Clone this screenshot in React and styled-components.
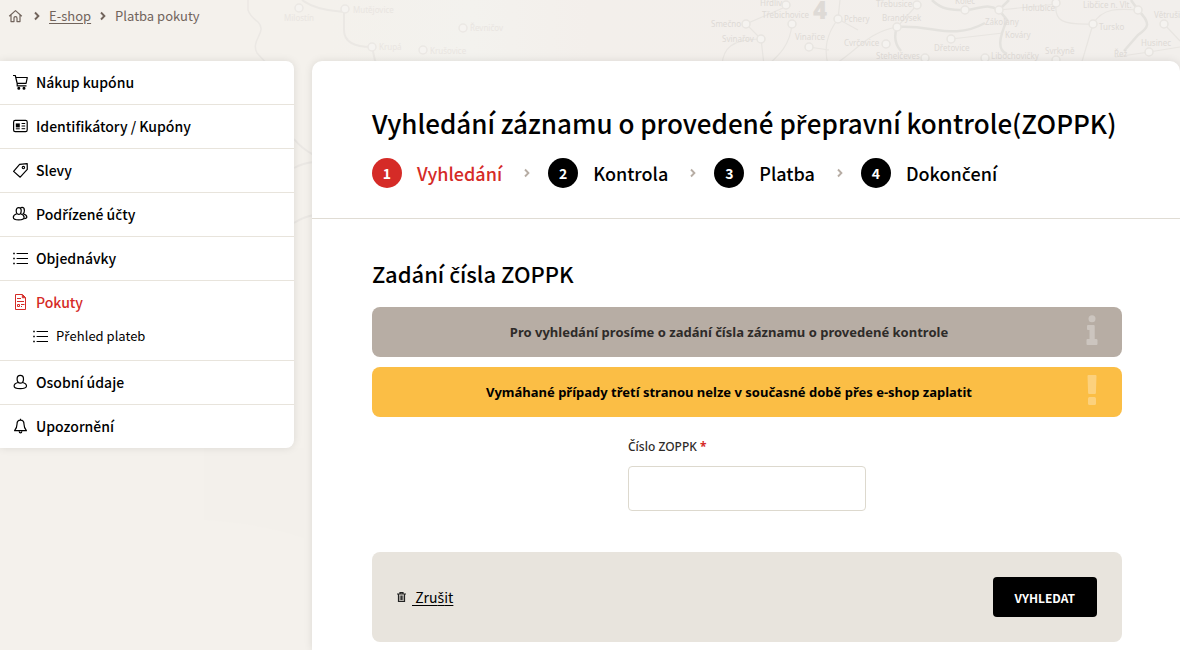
import { Fragment } from "react";
import styled, { createGlobalStyle } from "styled-components";

const fontFamily = `"Noto Sans CJK JP", "Noto Sans", sans-serif`;

const GlobalStyle = createGlobalStyle`
  * {
    box-sizing: border-box;
  }
  body {
    margin: 0;
    font-family: ${fontFamily};
    color: #000;
    background: #f4f1ec;
  }
`;

const Page = styled.div`
  position: relative;
  display: flex;
  flex-direction: column;
  min-height: 100vh;
  overflow: hidden;
`;

const MapBackground = styled.svg`
  position: absolute;
  top: 0;
  left: 0;
  z-index: -1;
  width: 1180px;
  height: 650px;
  font-family: "Noto Sans", sans-serif;
  font-size: 8px;
`;

const Breadcrumbs = styled.nav`
  display: flex;
  align-items: center;
  height: 61px;
  padding: 0 8px 30px;
  gap: 9px;
  font-size: 13px;
  line-height: 20px;
  color: #71645c;
  a {
    color: inherit;
    text-underline-offset: 2px;
  }
  svg {
    display: block;
  }
`;

const Columns = styled.div`
  display: flex;
  flex: 1;
  align-items: flex-start;
  gap: 18px;
`;

const Sidebar = styled.nav`
  flex: 0 0 294px;
  background: #fff;
  border-radius: 0 8px 8px 0;
  box-shadow: 0 0 8px #0000001a;
`;

const Menu = styled.ul`
  margin: 0;
  padding: 0;
  list-style: none;
`;

const MenuItem = styled.li`
  border-bottom: 1px solid #e8e4dc;
  &:last-child {
    border-bottom: 0;
  }
`;

const MenuLink = styled.a`
  display: flex;
  align-items: center;
  gap: 8px;
  padding: 10px 12px 11px;
  font-size: 14px;
  font-weight: 500;
  line-height: 22px;
  text-decoration: none;
  color: ${(p) => (p.$active ? "#d52b27" : "#000")};
`;

const SubMenu = styled.ul`
  margin: 0;
  padding: 0 0 12px 20px;
  list-style: none;
`;

const SubLink = styled(MenuLink)`
  padding: 0 12px;
  font-size: 13px;
  font-weight: 400;
  line-height: 24px;
`;

const Main = styled.main`
  flex: 1;
  align-self: stretch;
  background: #fff;
  border-radius: 10px 10px 0 0;
  box-shadow: 0 0 8px #0000001a;
`;

const Head = styled.header`
  padding: 44px 58px 30px 60px;
  border-bottom: 1px solid #e0dcd4;
`;

const Title = styled.h1`
  margin: 0 0 17px;
  font-size: 26px;
  font-weight: 500;
  line-height: 36px;
`;

const Steps = styled.ol`
  display: flex;
  align-items: center;
  margin: 0;
  padding: 0;
  list-style: none;
`;

const Step = styled.li`
  display: flex;
  align-items: center;
  gap: 15px;
  font-size: 18px;
  font-weight: 500;
  line-height: 30px;
  color: ${(p) => (p.$active ? "#d52b27" : "#000")};
`;

const StepNumber = styled.span`
  width: 30px;
  height: 30px;
  border-radius: 50%;
  background: ${(p) => (p.$active ? "#d52b27" : "#000")};
  color: #fff;
  font-size: 14px;
  font-weight: 700;
  text-align: center;
`;

const StepArrow = styled.li`
  display: flex;
  padding: 0 18px 0 22px;
`;

const Form = styled.form`
  padding: 38px 58px 8px 60px;
`;

const SectionTitle = styled.h2`
  margin: 0 0 18px;
  font-size: 22px;
  font-weight: 500;
  line-height: 32px;
`;

const Alert = styled.div`
  display: flex;
  align-items: center;
  gap: 24px;
  min-height: 50px;
  margin-bottom: 10px;
  padding: 0 24px;
  border-radius: 8px;
  background: ${(p) => (p.$warning ? "#fbbe45" : "#b7ada4")};
  color: ${(p) => (p.$warning ? "#000" : "#2e2b29")};
  p {
    flex: 1;
    margin: 0;
    font-family: "Noto Sans", sans-serif;
    font-size: 13px;
    font-weight: 700;
    line-height: 20px;
    text-align: center;
  }
`;

const Field = styled.div`
  width: 238px;
  margin: 20px auto 41px;
`;

const Label = styled.label`
  display: block;
  margin-bottom: 9px;
  font-family: "Noto Sans", sans-serif;
  font-size: 12px;
  font-weight: 500;
  line-height: 20px;
  color: #2e2b29;
`;

const Required = styled.span`
  color: #d52b27;
  font-weight: 700;
`;

const Input = styled.input`
  display: block;
  width: 100%;
  height: 45px;
  padding: 0 12px;
  border: 1px solid #ddd9ce;
  border-radius: 4px;
  background: #fff;
  font: 400 14px ${fontFamily};
`;

const Actions = styled.div`
  display: flex;
  align-items: center;
  justify-content: space-between;
  padding: 25px;
  border-radius: 8px;
  background: #e8e4dd;
`;

const CancelLink = styled.a`
  display: flex;
  align-items: center;
  gap: 5px;
  font-size: 14px;
  line-height: 20px;
  color: #000;
  text-decoration: none;
  span {
    white-space: pre;
    text-decoration: underline;
    text-underline-offset: 2px;
  }
`;

const SubmitButton = styled.button`
  height: 40px;
  padding: 0 22px;
  border: 0;
  border-radius: 4px;
  background: #000;
  color: #fff;
  font: 700 12px ${fontFamily};
  cursor: pointer;
`;

const Glyph = styled.i`
  font-family: "Noto Sans", sans-serif;
  font-style: normal;
  line-height: 0;
`;

const Czech = ({ children }) =>
  children
    .split(/([řčšžůŘČŠŽ]+)/)
    .map((part, i) =>
      i % 2 ? <Glyph key={i}>{part}</Glyph> : <Fragment key={i}>{part}</Fragment>
    );

const Icon = ({ children }) => (
  <svg
    width="16"
    height="16"
    viewBox="0 0 16 16"
    fill="none"
    stroke="currentColor"
    strokeWidth="1.2"
    strokeLinejoin="round"
    aria-hidden="true"
  >
    {children}
  </svg>
);

const CartIcon = () => (
  <Icon>
    <path d="M1 1.500h2.300l1.900 8M3.700 3.500h11.600l-1.200 5.800H5.200v2.600h9.300" />
    <circle cx="6.800" cy="14.200" r=".9" fill="currentColor" />
    <circle cx="12" cy="14.200" r=".9" fill="currentColor" />
  </Icon>
);

const CardIcon = () => (
  <Icon>
    <rect x="1.6" y="2.4" width="13.6" height="11.2" rx="1.6" />
    <path d="M3.8 5.4h4v4h-4z" fill="currentColor" stroke="none" />
    <path d="M9.6 5.5h3.6M9.6 8h3.6M9.6 10.7h3.6M3.8 10.8h4" strokeWidth="1" />
  </Icon>
);

const TagIcon = () => (
  <Icon>
    <path d="M1.600 9.400 7.600 2.400l7.600-.8.1 5.800-7.100 7.800z" />
    <circle cx="11.400" cy="5.600" r="1.200" strokeWidth="1.100" />
  </Icon>
);

const UsersIcon = () => (
  <Icon>
    <path d="M4.2 4.600c0-2 1.100-3 2.500-3s2.500 1 2.500 3-.7 3.800-2.500 3.800-2.500-1.800-2.500-3.800z" />
    <path d="M4.800 7.700c-2.400.8-3.500 1.900-3.500 3.600 0 2 2.200 2.600 5.400 2.600s5.400-.6 5.400-2.600c0-1.700-1.100-2.800-3.500-3.600" />
    <path d="M8.400 1.900c.5-.4 1.100-.5 1.700-.5 1.400 0 2.300 1.100 2.300 3 0 1.500-.4 2.700-1.300 3.300 2.500.8 3.700 1.700 3.700 3.200 0 .9-.7 1.500-2.600 1.700" />
  </Icon>
);

const ListIcon = () => (
  <Icon>
    <path d="M1.200 3.500h1.600M1.200 8.500h1.600M1.200 13.500h1.600" strokeWidth="1.600" />
    <path d="M4.600 3.500H16M4.600 8.500H16M4.600 13.500H16" />
  </Icon>
);

const FineIcon = () => (
  <Icon>
    <path d="M3.500.5h7l3 3v12h-10z" strokeWidth="1" strokeLinejoin="miter" />
    <path d="M10.300.8v3h3z" fill="currentColor" strokeWidth=".8" />
    <path d="M5 4.500h4M5 7.500h7" strokeWidth="1" />
    <path d="M5.500 10.500h2v2h-2zM9 10.500h3.500M9 12.500h1" strokeWidth="1" />
  </Icon>
);

const UserIcon = () => (
  <Icon>
    <path d="M5.100 4.900c0-2.300 1.300-3.500 3.200-3.500s3.200 1.200 3.200 3.500-1 4.300-3.200 4.300-3.200-2-3.200-4.300z" />
    <path d="M6 8.500c-2.600.7-3.900 1.800-3.900 3.400 0 2 2.600 2.700 6.200 2.700s6.200-.7 6.200-2.700c0-1.600-1.300-2.700-3.900-3.400" />
  </Icon>
);

const BellIcon = () => (
  <Icon>
    <path d="M8.500 2.200C6 2.200 5 4 5 6.200c0 3.200-.9 4.600-2.400 6.500h11.800C12.900 10.800 12 9.400 12 6.200c0-2.200-1-4-3.500-4zM8.500 2.200V.8" />
    <path d="M7.200 13.200c0 1 .5 1.700 1.300 1.700s1.300-.7 1.300-1.700" />
  </Icon>
);

const HomeIcon = () => (
  <svg
    width="17"
    height="14"
    viewBox="0 0 17 14"
    fill="none"
    stroke="#71645c"
    strokeWidth="1.200"
    strokeLinejoin="round"
    aria-hidden="true"
  >
    <path d="M1.200 7.200 7.500 1.600l6.300 5.600M3 6v6.600h3V9.200c0-1 .5-1.600 1.500-1.600S9 8.200 9 9.200v3.400h3V6" />
  </svg>
);

const Chevron = ({ color }) => (
  <svg width="6" height="10" viewBox="0 0 6 10" fill="none" stroke={color} strokeWidth="1.900" aria-hidden="true">
    <path d="M1 1.500 4.400 5 1 8.500" />
  </svg>
);

const InfoIcon = () => (
  <svg width="12" height="34" viewBox="0 0 12 34" fill="#fff" fillOpacity=".3" aria-hidden="true">
    <circle cx="6" cy="3.700" r="3.500" />
    <path d="M2 10h5.700q1 0 1 1v13h1.300q1.500 0 1.500 1v4q0 1-1 1h-9q-1 0-1-1v-4q0-1 1-1h2v-9h-1.500q-1 0-1-1v-3q0-1 1-1z" />
  </svg>
);

const WarningIcon = () => (
  <svg width="12" height="34" viewBox="0 0 12 34" fill="#fff" fillOpacity=".3" aria-hidden="true">
    <path d="M2.500 0h7q1 0 1 1l-.6 17q0 1-1 1H3.100q-1 0-1-1L1.500 1q0-1 1-1z" />
    <rect x="2" y="22" width="8" height="8" rx="1.500" />
  </svg>
);

const TrashIcon = () => (
  <svg width="10" height="10" viewBox="0 0 10 10" fill="none" stroke="#222" aria-hidden="true">
    <path d="M0 2h9M3 1.700V.6h3v1.100M1.500 2.500V9.300h6V2.500" strokeWidth="1.200" />
    <path d="M3.200 3.500v4.500M4.500 3.500v4.500M5.800 3.500v4.500" strokeWidth=".9" />
  </svg>
);

const westTowns = [
  ["Milostín", 284, 21, 299, 8],
  ["Mutějovice", 353, 13, 345, 9],
  ["Řevničov", 470, 31, 463, 28],
  ["Krupá", 379, 50, 372, 47],
  ["Krušovice", 430, 54, 423, 50],
];

const eastTowns = [
  ["Hřdlív", 760, 6, 786, 5],
  ["Třebichovice", 762, 18, 792, 24],
  ["Smečno", 711, 27, 746, 24],
  ["Svinařov", 722, 42, 761, 39],
  ["Pchery", 844, 22, 838, 19],
  ["Vinařice", 795, 40, 809, 47],
  ["Cvrčovice", 844, 46, 886, 44],
  ["Brandýsek", 882, 21, 897, 27],
  ["Třebusice", 876, 7, 917, 5],
  ["Koleč", 955, 4, 965, 10],
  ["Zákolany", 985, 25, 999, 10],
  ["Holubice", 1022, 11, 1056, 3],
  ["Libčice n. Vlt.", 1083, 8, 1138, 10],
  ["Větruši", 1154, 18, 1164, 24],
  ["Tursko", 1099, 30, 1093, 24],
  ["Dřetovice", 934, 51, 951, 39],
  ["Stehelčeves", 876, 59, 925, 58],
  ["Libochovičky", 991, 59, 985, 58],
  ["Svrkyně", 1045, 54, 1056, 60],
  ["Husinec", 1141, 46, 1149, 52],
];

const Towns = ({ towns }) =>
  towns.map(([name, x, y, cx, cy]) => (
    <g key={name}>
      <circle cx={cx} cy={cy} r="4" fill="#f5f3f0" strokeWidth="1.500" />
      <text x={x} y={y} stroke="none">
        {name}
      </text>
    </g>
  ));

const RailMap = () => (
  <MapBackground viewBox="0 0 1180 650" aria-hidden="true">
    <defs>
      <linearGradient id="land" x1="0" x2="1">
        <stop offset="0" stopColor="#f4f1ec" />
        <stop offset=".28" stopColor="#f4f1ec" />
        <stop offset=".4" stopColor="#f3f2ee" />
        <stop offset=".5" stopColor="#f3efeb" />
        <stop offset="1" stopColor="#f2efec" />
      </linearGradient>
    </defs>
    <rect width="1180" height="650" fill="url(#land)" />
    <path d="M204 448h100v90q-40-14-100-18z" fill="#f3f0eb" />
    <g fill="none" stroke="#ebe8e4">
      <path d="M248 0v10q2 6 10 12c10 10-8 18-1 31l11 12" strokeWidth="1.500" />
      <path d="M302 0c12 9 26 10 42 12v18c0 13 12 17 28 17l4 18" strokeWidth="2" />
      <path d="M294 139q8 10 20 16M294 168q9-5 20-6M294 223q9-6 20-8" strokeWidth="2" />
      <g fill="#e9e5e1">
        <Towns towns={westTowns} />
      </g>
    </g>
    <g fill="none" stroke="#e8e5e1">
      <path
        d="M783 8l-37 16 15 15c-30 0-38 10-39 26M761 39l3 26M792 24c-2 22-14 32-24 41M840 0l-2 19 20 11M838 19c-12 16-14 30-10 46M809 47l20 3M897 27c-30 6-36 20-60 36M917 5l-20 22M951 39l52-6M999 10l59-6M1056 3c-2 18 6 22 37 21M1093 24c10-18 30-15 45-14M1093 24l-12 41M1164 24l16 17M1149 52l31-5M1149 52l-34 5"
        strokeWidth="1.200"
      />
      <path
        d="M932 0c10 10 20 10 33 10 14 0 20-8 34 0l10-10M897 27c35-3 55 14 88-4M897 27q-5 14 4 24M999 10l8 10c-8 18-10 30 0 34"
        strokeWidth="2.500"
        stroke="#e4e2de"
      />
      <path d="M1131 0l7 10c14 14 10 18 0 25l-14 16" strokeWidth="2.500" stroke="#e4e2de" />
      <g fill="#dedad6">
        <Towns towns={eastTowns} />
        <text x="1005" y="38" stroke="none">
          Kováry
        </text>
        <text x="1114" y="57" stroke="none">
          Řež
        </text>
        <text x="813" y="19" stroke="none" fontSize="24" fontWeight="900">
          4
        </text>
      </g>
    </g>
  </MapBackground>
);

const menu = [
  { label: "Nákup kupónu", icon: CartIcon },
  { label: "Identifikátory / Kupóny", icon: CardIcon },
  { label: "Slevy", icon: TagIcon },
  { label: "Podřízené účty", icon: UsersIcon },
  { label: "Objednávky", icon: ListIcon },
  { label: "Pokuty", icon: FineIcon, active: true, children: ["Přehled plateb"] },
  { label: "Osobní údaje", icon: UserIcon },
  { label: "Upozornění", icon: BellIcon },
];

const steps = ["Vyhledání", "Kontrola", "Platba", "Dokončení"];

export default function App() {
  return (
    <Page>
      <GlobalStyle />
      <RailMap />
      <Breadcrumbs>
        <a href="#" aria-label="Domů">
          <HomeIcon />
        </a>
        <Chevron color="#71645c" />
        <a href="#">E-shop</a>
        <Chevron color="#71645c" />
        <span>Platba pokuty</span>
      </Breadcrumbs>
      <Columns>
        <Sidebar>
          <Menu>
            {menu.map(({ label, icon: ItemIcon, active, children }) => (
              <MenuItem key={label}>
                <MenuLink href="#" $active={active}>
                  <ItemIcon />
                  <span>
                    <Czech>{label}</Czech>
                  </span>
                </MenuLink>
                {children && (
                  <SubMenu>
                    {children.map((child) => (
                      <li key={child}>
                        <SubLink href="#">
                          <ListIcon />
                          <span>
                            <Czech>{child}</Czech>
                          </span>
                        </SubLink>
                      </li>
                    ))}
                  </SubMenu>
                )}
              </MenuItem>
            ))}
          </Menu>
        </Sidebar>
        <Main>
          <Head>
            <Title>
              <Czech>Vyhledání záznamu o provedené přepravní kontrole(ZOPPK)</Czech>
            </Title>
            <Steps>
              {steps.map((step, i) => (
                <Fragment key={step}>
                  {i > 0 && (
                    <StepArrow aria-hidden="true">
                      <Chevron color="#b7ada4" />
                    </StepArrow>
                  )}
                  <Step $active={i === 0}>
                    <StepNumber $active={i === 0}>{i + 1}</StepNumber>
                    <span>
                      <Czech>{step}</Czech>
                    </span>
                  </Step>
                </Fragment>
              ))}
            </Steps>
          </Head>
          <Form onSubmit={(e) => e.preventDefault()}>
            <SectionTitle>
              <Czech>Zadání čísla ZOPPK</Czech>
            </SectionTitle>
            <Alert>
              <p>Pro vyhledání prosíme o zadání čísla záznamu o provedené kontrole</p>
              <InfoIcon />
            </Alert>
            <Alert $warning>
              <p>Vymáhané případy třetí stranou nelze v současné době přes e-shop zaplatit</p>
              <WarningIcon />
            </Alert>
            <Field>
              <Label htmlFor="zoppk">
                Číslo ZOPPK <Required>*</Required>
              </Label>
              <Input id="zoppk" type="text" required />
            </Field>
            <Actions>
              <CancelLink href="#">
                <TrashIcon />
                <span>
                  <Czech> Zrušit</Czech>
                </span>
              </CancelLink>
              <SubmitButton type="submit">VYHLEDAT</SubmitButton>
            </Actions>
          </Form>
        </Main>
      </Columns>
    </Page>
  );
}
